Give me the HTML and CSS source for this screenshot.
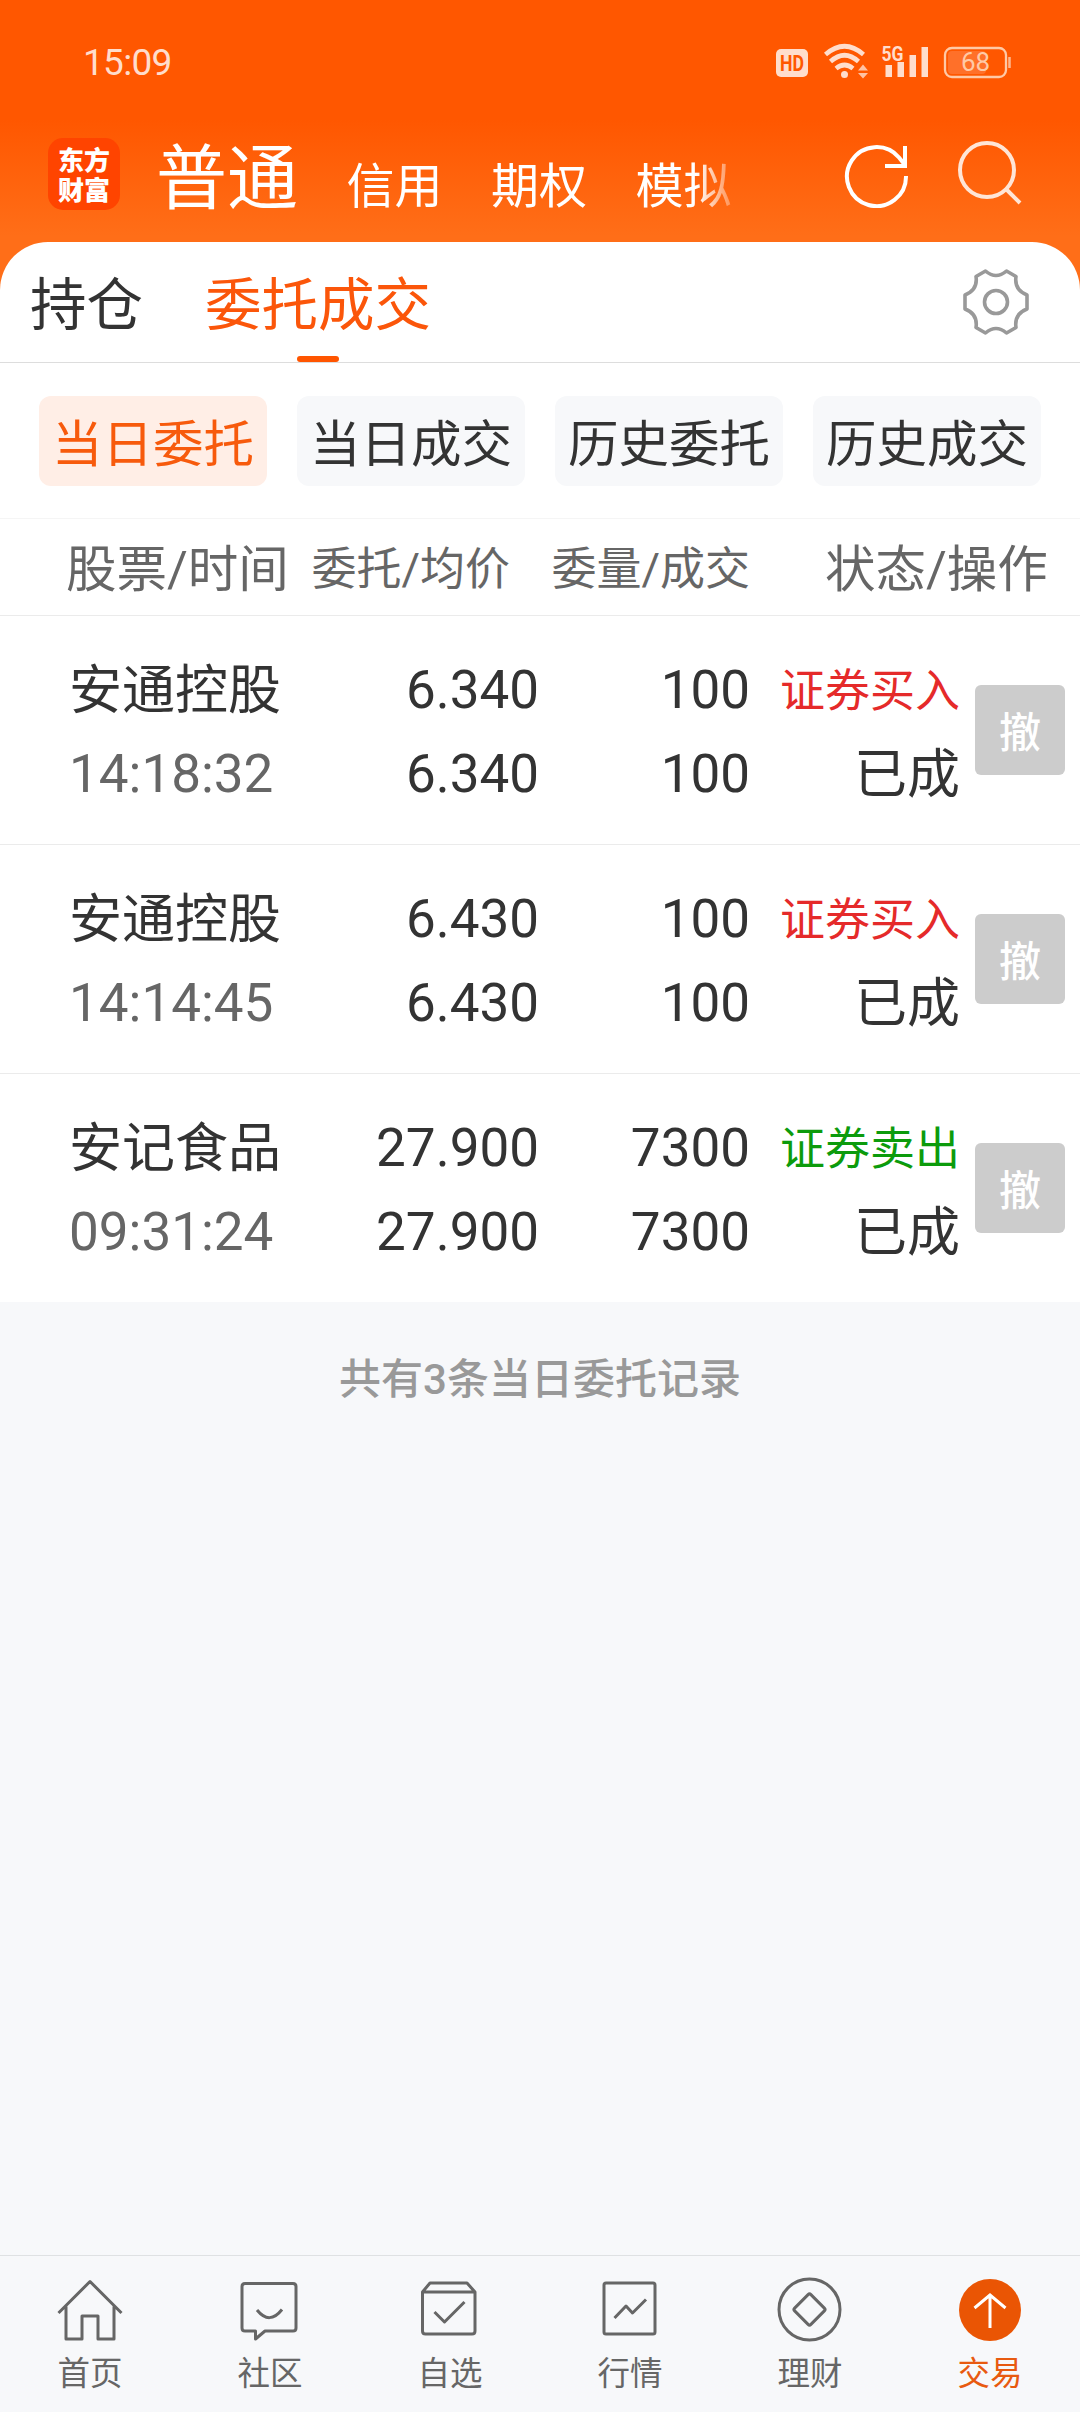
FILE: index.html
```html
<!DOCTYPE html>
<html lang="zh-CN">
<head>
<meta charset="utf-8">
<title>委托成交</title>
<link rel="stylesheet" href="styles.css">
</head>
<body>
<div class="app">
  <header class="top">
    <div class="status">
      <span class="clock">15:09</span>
      <svg class="status-icons" width="236" height="36" viewBox="776 43 236 36">
        <g fill="#ffddcc">
          <rect x="776" y="49" width="32" height="28" rx="5"/>
          <text x="792" y="71" class="hd" textLength="24" lengthAdjust="spacingAndGlyphs">HD</text>
          <circle cx="844.500" cy="74.500" r="3.500"/>
          <path d="M858 70.500l5-6 5 6zM858 73h10l-5 5.500z" opacity=".8"/>
          <text x="892.500" y="61" class="net" textLength="22" lengthAdjust="spacingAndGlyphs">5G</text>
          <rect x="885.500" y="65" width="6.500" height="12"/>
          <rect x="897.500" y="62" width="6.500" height="15"/>
          <rect x="909.500" y="55" width="6.500" height="22"/>
          <rect x="921.500" y="47" width="6.500" height="30"/>
        </g>
        <g fill="none" stroke="#ffddcc" stroke-width="4.600">
          <path d="M825.500 54.500Q844.500 38 863.500 54.500"/>
          <path d="M830.500 61.500Q844.500 49 858.500 61.500"/>
          <path d="M836 68.500Q844.500 61.500 853 68.500"/>
        </g>
        <rect x="948" y="51" width="38" height="23" rx="4" fill="#ff7029"/>
        <rect x="945" y="48" width="61" height="29" rx="7" fill="none" stroke="#ffc9a6" stroke-width="2.300"/>
        <path d="M1009.500 57v11" stroke="#ffb88f" stroke-width="2.500"/>
        <text x="975.500" y="71" class="pct">68</text>
      </svg>
    </div>
    <div class="bar">
      <div class="logo"><span>东方</span><span>财富</span></div>
      <nav class="accounts"><b>普通</b><span>信用</span><span>期权</span><span>模拟</span></nav>
      <svg class="refresh" width="66" height="66" viewBox="0 0 66 66" fill="none" stroke="#fff" stroke-width="4">
        <path d="M62 34A29.500 29.500 0 1 1 55 15.500L61 23"/><path d="M61 4v20H41"/>
      </svg>
      <svg class="search" width="66" height="66" viewBox="0 0 66 66" fill="none" stroke="#ffe5d6" stroke-width="4">
        <circle cx="30" cy="30" r="27"/><path d="M49 49l14 14"/>
      </svg>
    </div>
  </header>
  <main class="sheet">
    <div class="tabs">
      <span>持仓</span><span class="on">委托成交</span>
      <svg class="gear" width="68" height="68" viewBox="-34 -34 68 68" fill="none" stroke="#999" stroke-width="3.600" stroke-linejoin="round">
        <path d="M-10.500-31Q0-22 10.500-31L20-25.500Q18-12 31-7V7Q18 12 20 25.500L10.500 31Q0 22-10.500 31L-20 25.500Q-18 12-31 7V-7Q-18-12-20-25.500Z"/><circle r="11.500"/>
      </svg>
    </div>
    <div class="chips"><span class="on">当日委托</span><span>当日成交</span><span>历史委托</span><span>历史成交</span></div>
    <div class="thead"><span class="big">股票/时间</span><span class="r">委托/均价</span><span class="r">委量/成交</span><span class="big last">状态/操作</span></div>
    <div class="row">
      <div class="name"><p>安通控股</p><p class="time">14:18:32</p></div><div><p>6.340</p><p>6.340</p></div><div><p>100</p><p>100</p></div><div><p class="side buy">证券买入</p><p class="state">已成</p></div><button>撤</button>
    </div>
    <div class="row">
      <div class="name"><p>安通控股</p><p class="time">14:14:45</p></div><div><p>6.430</p><p>6.430</p></div><div><p>100</p><p>100</p></div><div><p class="side buy">证券买入</p><p class="state">已成</p></div><button>撤</button>
    </div>
    <div class="row">
      <div class="name"><p>安记食品</p><p class="time">09:31:24</p></div><div><p>27.900</p><p>27.900</p></div><div><p>7300</p><p>7300</p></div><div><p class="side sell">证券卖出</p><p class="state">已成</p></div><button>撤</button>
    </div>
  </main>
  <p class="total">共有3条当日委托记录</p>
  <nav class="nav">
    <a><svg viewBox="0 0 72 72"><path d="M4.500 41L36 9.500 67.500 41M12 34.500V67h16V44h16v23h16V34.500"/></svg>首页</a>
    <a><svg viewBox="0 0 72 72"><path d="M11 11.500H59Q62 11.500 62 14.500V56Q62 59 59 59H31L21.500 67V59H11Q8 59 8 56V14.500Q8 11.500 11 11.500ZM23 38Q35.500 53.500 48 37.500"/></svg>社区</a>
    <a><svg viewBox="0 0 72 72"><path d="M8.500 20L16 11H53L61 20V59Q61 62 58 62H11.500Q8.500 62 8.500 59ZM8.500 20H61M20.500 40l10 10 20-20"/></svg>自选</a>
    <a><svg viewBox="0 0 72 72"><rect x="10" y="11" width="51" height="51" rx="2"/><path d="M20.500 46L32 34l6.500 7L52 27.500"/></svg>行情</a>
    <a><svg viewBox="0 0 72 72"><circle cx="35.500" cy="37.500" r="30.500"/><rect x="24" y="26" width="23" height="23" rx="2" transform="rotate(45 35.500 37.500)"/></svg>理财</a>
    <a class="on"><svg viewBox="0 0 72 72"><circle class="disc" cx="36" cy="38" r="31"/><path class="arrow" d="M36 56V24M20.500 36L36 23 51.500 36"/></svg>交易</a>
  </nav>
</div>
</body>
</html>
```
FILE: styles.css
```css
* { box-sizing: border-box; }
body { margin: 0; }
p { margin: 0; }
.app {
  width: 1080px; height: 2412px; display: flex; flex-direction: column;
  background: #f7f8fa; color: #333; overflow: hidden;
  font-family: Roboto, "Noto Sans CJK SC", sans-serif;
}
.top { height: 290px; flex: none; background: linear-gradient(#ff5700 0, #ff5700 120px, #ff6e18 236px, #ff6e18); }
.status { height: 120px; padding: 43px 68px 0 83px; display: flex; justify-content: space-between; }
.clock { font-size: 37px; line-height: 40px; letter-spacing: -0.7px; color: #ffddcc; }
.hd { font: bold 22px Roboto, sans-serif; fill: #ff5700; text-anchor: middle; }
.net { font: bold 21px Roboto, sans-serif; text-anchor: middle; }
.pct { font: 26px Roboto, sans-serif; fill: #ffc9a6; text-anchor: middle; }
.bar { display: flex; height: 122px; padding-left: 48px; color: #fff; }
.logo {
  width: 72px; height: 72px; margin-top: 18px; border-radius: 15px; background: #ff4400;
  display: flex; flex-direction: column; align-items: center; justify-content: center;
  font: 900 26px/30px "Noto Sans CJK SC", sans-serif;
}
.accounts {
  display: flex; align-items: baseline; gap: 48.5px; width: 575px; margin-left: 36px;
  font-size: 48px; line-height: 117px; white-space: nowrap; overflow: hidden;
  -webkit-mask-image: linear-gradient(90deg, #000 540px, transparent 590px);
  mask-image: linear-gradient(90deg, #000 540px, transparent 590px);
}
.accounts b { font-size: 71px; font-weight: 400; }
.refresh { margin: 22px 0 0 113px; }
.search { margin: 20px 0 0 47px; }
.sheet { margin-top: -48px; background: #fff; border-radius: 48px 48px 0 0; flex: none; }
.tabs { height: 121px; display: flex; padding: 0 50px 0 30px; border-bottom: 1px solid #ddd; font-size: 56.5px; line-height: 128px; }
.tabs span { position: relative; height: 120px; }
.tabs .on { margin-left: 62px; color: #fb560a; }
.tabs .on::after { content: ""; position: absolute; left: 50%; bottom: 0; width: 42px; height: 6px; margin-left: -21px; border-radius: 3px; background: #ff5500; }
.gear { margin: 26px 0 0 auto; }
.chips { display: flex; gap: 30px; padding: 33px 39px 32px; border-bottom: 1px solid #f5f5f5; }
.chips span { width: 228px; height: 90px; border-radius: 12px; background: #f7f8fa; font-size: 50.5px; line-height: 97px; text-align: center; }
.chips .on { background: #ffeee6; color: #f75a0c; }
.thead, .row { display: grid; grid-template-columns: 230px 243px 211px 210px; padding-left: 66px; border-bottom: 1px solid #ebebeb; }
.thead { height: 97px; font-size: 45px; line-height: 102px; color: #666; white-space: nowrap; }
.thead .big { font-size: 50.5px; }
.thead .r { text-align: right; }
.thead span:nth-child(2) { padding-right: 29px; }
.thead .last { padding-left: 75px; }
.row { grid-template-columns: 230px 243px 211px 210px 90px; height: 229px; padding-top: 32px; font-size: 53px; line-height: 84px; text-align: right; }
.row:last-child { border: 0; height: 228px; }
.row p { height: 84px; white-space: nowrap; }
.name { text-align: left; padding-left: 3px; }
.name p:first-child, .row .side, .row .state { line-height: 87px; }
.name .time { color: #666; }
.side { font-size: 45px; }
.buy { color: #e52a2a; }
.sell { color: #0c9b0c; }
.row button {
  width: 90px; height: 90px; margin: 37px 0 0 15px; padding: 0; border: 0; border-radius: 6px;
  background: #ccc; color: #fff; font: 500 42px/90px "Noto Sans CJK SC", sans-serif;
}
.total { margin-top: 48px; text-align: center; color: #999; font-size: 42px; line-height: 60px; font-weight: 500; }
.nav { margin-top: auto; height: 157px; flex: none; border-top: 1px solid #dfe1e3; display: grid; grid-template-columns: repeat(6, 1fr); color: #666; }
.nav a { display: flex; flex-direction: column; align-items: center; padding-top: 16px; font-size: 32.5px; line-height: 61px; }
.nav svg { width: 72px; height: 72px; fill: none; stroke: #666; stroke-width: 3; stroke-linejoin: round; }
.nav .on { color: #e85a10; }
.nav .disc { fill: #ea5504; stroke: none; }
.nav .arrow { stroke: #fff; stroke-linejoin: miter; }
```
